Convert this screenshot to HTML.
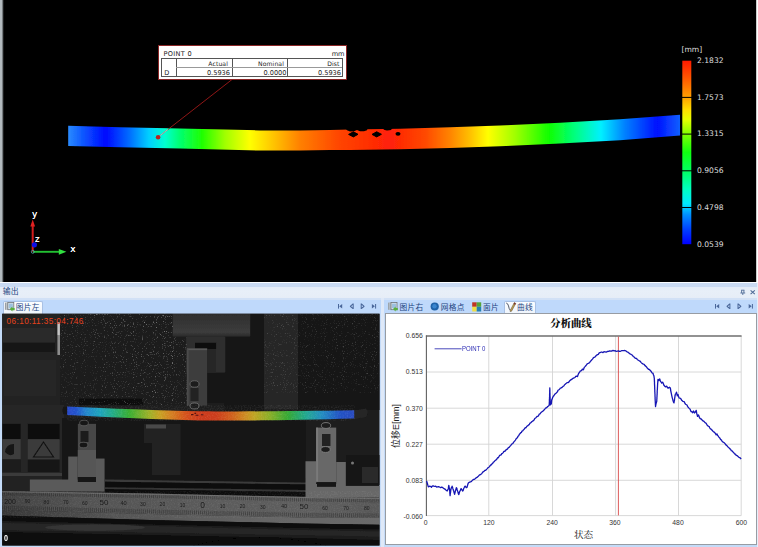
<!DOCTYPE html>
<html lang="zh">
<head>
<meta charset="utf-8">
<title>输出</title>
<style>
html,body{margin:0;padding:0}
body{width:758px;height:547px;position:relative;overflow:hidden;background:#c4dbf8;font-family:"Liberation Sans","Noto Sans CJK SC",sans-serif}
.a{position:absolute}
svg{position:absolute;left:0;top:0;display:block}
.t{position:absolute;white-space:nowrap;line-height:1}
.dv{font-family:"DejaVu Sans","Liberation Sans",sans-serif}
.tab{font-size:7.7px;color:#22437f;letter-spacing:.25px}
.yl{font-size:6.8px;color:#333;text-align:right;width:30px}
.xl{font-size:6.8px;color:#333;text-align:center;width:30px}
.cb{font-size:7.6px;color:#dedede}
.lb{font-size:6.6px;color:#222}
</style>
</head>
<body>
<!-- ================= 3D VIEW ================= -->
<div class="a" style="left:0;top:0;width:758px;height:282px;background:#000"></div>
<div class="a" style="left:0;top:0;width:4px;height:282px;background:linear-gradient(90deg,#b4bcc0 0,#b0b8bc 2px,#3a3d3f 3px,#000 4px)"></div>
<div class="a" style="left:756px;top:0;width:2px;height:283px;background:linear-gradient(90deg,#9a9a9a,#fff 1px)"></div>
<svg width="758" height="282" viewBox="0 0 758 282">
<defs>
<linearGradient id="bg" gradientUnits="userSpaceOnUse" x1="68" y1="0" x2="680" y2="0">
<stop offset="0.0000" stop-color="#2a8cff"/>
<stop offset="0.0278" stop-color="#0a50ff"/>
<stop offset="0.0621" stop-color="#0008ff"/>
<stop offset="0.1013" stop-color="#0070ff"/>
<stop offset="0.1324" stop-color="#00d0ff"/>
<stop offset="0.1585" stop-color="#00ffd0"/>
<stop offset="0.1830" stop-color="#00ff70"/>
<stop offset="0.2190" stop-color="#20ff00"/>
<stop offset="0.2565" stop-color="#a0ff00"/>
<stop offset="0.2974" stop-color="#ffff00"/>
<stop offset="0.3382" stop-color="#ffc000"/>
<stop offset="0.3791" stop-color="#ff8000"/>
<stop offset="0.4444" stop-color="#ff4400"/>
<stop offset="0.5261" stop-color="#ff2008"/>
<stop offset="0.5833" stop-color="#ff4800"/>
<stop offset="0.6242" stop-color="#ff8400"/>
<stop offset="0.6569" stop-color="#ffc000"/>
<stop offset="0.6863" stop-color="#ffff00"/>
<stop offset="0.7304" stop-color="#a0ff00"/>
<stop offset="0.7859" stop-color="#10ff00"/>
<stop offset="0.8284" stop-color="#00ff80"/>
<stop offset="0.8709" stop-color="#00f0ff"/>
<stop offset="0.9101" stop-color="#0080ff"/>
<stop offset="0.9624" stop-color="#0010ff"/>
<stop offset="1.0000" stop-color="#1060ff"/>
</linearGradient>
<linearGradient id="cbar" gradientUnits="userSpaceOnUse" x1="0" y1="60.7" x2="0" y2="244">
<stop offset="0" stop-color="#ff1a00"/>
<stop offset="0.10" stop-color="#ff5a00"/>
<stop offset="0.20" stop-color="#ffa000"/>
<stop offset="0.27" stop-color="#ffe000"/>
<stop offset="0.32" stop-color="#e8ff00"/>
<stop offset="0.40" stop-color="#80ff00"/>
<stop offset="0.50" stop-color="#10ff10"/>
<stop offset="0.60" stop-color="#00ff60"/>
<stop offset="0.70" stop-color="#00ffc0"/>
<stop offset="0.78" stop-color="#00e8ff"/>
<stop offset="0.84" stop-color="#0090ff"/>
<stop offset="0.92" stop-color="#0040ff"/>
<stop offset="1" stop-color="#0000ff"/>
</linearGradient>
<filter id="soft" x="-5%" y="-20%" width="110%" height="140%"><feGaussianBlur stdDeviation="0.45"/></filter>
</defs>
<!-- beam -->
<g filter="url(#soft)">
<path d="M68.2 125.8 L120.0 127.2 L180.0 128.5 L260.0 130.4 L300.0 130.5 L330.0 130.0 L350.0 129.6 L400.0 128.7 L450.0 127.3 L500.0 125.6 L560.0 122.8 L620.0 119.3 L680.0 114.8 L680.0 135.6 L620.0 140.2 L560.0 143.6 L500.0 146.3 L450.0 147.9 L400.0 149.2 L350.0 150.0 L330.0 150.1 L300.0 150.4 L260.0 150.6 L180.0 148.6 L120.0 147.3 L68.2 145.9z" fill="url(#bg)"/>
<path d="M348.6 134.4 L353.4 131.8 L358 134.3 L353.4 136.9z" fill="#000" stroke="#000" stroke-width="1" stroke-linejoin="round"/>
<path d="M372 134.4 L376.7 131.8 L381.4 134.3 L376.7 136.9z" fill="#000" stroke="#000" stroke-width="1" stroke-linejoin="round"/>
<ellipse cx="398" cy="133.8" rx="2.5" ry="1.9" fill="#000"/>
<path d="M344 127 l3 3.2 l3 1.2 l4 -0.2 l3 -1.2 l3 1.2 l4 0 l3 -1 l1 -3.2z M382 127 l2 2.8 l3 0.8 l4 -0.6 l2 -3z" fill="#000"/>
</g>
<!-- leader -->
<line x1="158.5" y1="136.8" x2="232" y2="79.5" stroke="#a01818" stroke-width="0.9"/>
<line x1="159" y1="136.4" x2="168" y2="129.4" stroke="#d8f0f0" stroke-width="0.9" opacity=".75"/>
<circle cx="158.1" cy="137.2" r="2.3" fill="#b82222"/>
<!-- colour bar -->
<rect x="682.3" y="60.7" width="9" height="183.5" fill="url(#cbar)"/>
<g stroke="#000" stroke-width="1">
<line x1="681" y1="97.4" x2="692.5" y2="97.4"/><line x1="681" y1="134.1" x2="692.5" y2="134.1"/><line x1="681" y1="170.8" x2="692.5" y2="170.8"/><line x1="681" y1="207.5" x2="692.5" y2="207.5"/>
</g>
<!-- axes -->
<g filter="url(#soft)">
<line x1="32.7" y1="251.6" x2="32.7" y2="225" stroke="#d21c1c" stroke-width="2"/>
<path d="M32.7 219.5 L35.1 226.6 L30.3 226.6z" fill="#e02020"/>
<line x1="33" y1="251.8" x2="60" y2="251.8" stroke="#22c032" stroke-width="1.9"/>
<path d="M66.4 251.8 L58.8 248.9 L58.8 254.7z" fill="#30e040"/>
<circle cx="34.4" cy="244.8" r="2.6" fill="#1010e8"/>
<circle cx="32.8" cy="251.8" r="1.5" fill="none" stroke="#5aa0a8" stroke-width="0.8"/>
</g>
</svg>
<div class="t dv" style="left:32.1px;top:209.8px;font-size:9px;color:#fff;text-shadow:0 0 .4px #fff">y</div>
<div class="t dv" style="left:35px;top:234.9px;font-size:8.6px;color:#fff;text-shadow:0 0 .4px #fff">z</div>
<div class="t dv" style="left:70.3px;top:245.3px;font-size:9px;color:#fff;text-shadow:0 0 .4px #fff">x</div>
<!-- colour bar labels -->
<div class="t dv cb" style="left:681.5px;top:45.6px">[mm]</div>
<div class="t dv cb" style="left:697px;top:56.8px">2.1832</div>
<div class="t dv cb" style="left:697px;top:93.6px">1.7573</div>
<div class="t dv cb" style="left:697px;top:130.3px">1.3315</div>
<div class="t dv cb" style="left:697px;top:167.0px">0.9056</div>
<div class="t dv cb" style="left:697px;top:203.8px">0.4798</div>
<div class="t dv cb" style="left:697px;top:240.5px">0.0539</div>
<!-- annotation label -->
<div class="a" style="left:157.8px;top:45.4px;width:187.2px;height:32.8px;background:#fff;border:1px solid #8a2626"></div>
<div class="t dv lb" style="left:163.6px;top:51.4px;letter-spacing:.3px">POINT 0</div>
<div class="t dv lb" style="left:300px;width:44.5px;text-align:right;top:51.4px">mm</div>
<div class="a" style="left:161px;top:57.7px;width:179.8px;height:17.8px;border:1px solid #555;box-sizing:content-box"></div>
<div class="a" style="left:176px;top:58px;width:1px;height:18px;background:#555"></div>
<div class="a" style="left:231.5px;top:58px;width:1px;height:18px;background:#555"></div>
<div class="a" style="left:287px;top:58px;width:1px;height:18px;background:#555"></div>
<div class="a" style="left:176px;top:67px;width:165.6px;height:1px;background:#999"></div>
<div class="t dv lb" style="left:180px;width:48px;text-align:right;top:60.9px;font-size:6.1px;letter-spacing:.1px">Actual</div>
<div class="t dv lb" style="left:236px;width:48px;text-align:right;top:60.9px;font-size:6.1px;letter-spacing:.1px">Nominal</div>
<div class="t dv lb" style="left:292px;width:47.6px;text-align:right;top:60.9px;font-size:6.1px;letter-spacing:.1px">Dist</div>
<div class="t dv lb" style="left:164.3px;top:70.2px">D</div>
<div class="t dv lb" style="left:180px;width:50px;text-align:right;top:70.2px">0.5936</div>
<div class="t dv lb" style="left:236px;width:50.5px;text-align:right;top:70.2px">0.0000</div>
<div class="t dv lb" style="left:292px;width:49px;text-align:right;top:70.2px">0.5936</div>
<!-- ================= OUTPUT PANEL HEADER ================= -->
<div class="a" style="left:0;top:282px;width:758px;height:1.4px;background:#fafcff"></div>
<div class="a" style="left:0;top:283.4px;width:758px;height:3.3px;background:#c9daf2"></div>
<div class="a" style="left:0;top:286.6px;width:758px;height:11.6px;background:linear-gradient(180deg,#e4ecf7,#e8eff8 40%,#e6edf7)"></div>
<div class="a" style="left:0;top:298.1px;width:758px;height:1.5px;background:#d2e1f6"></div>
<div class="a" style="left:0;top:299.5px;width:758px;height:14px;background:#bfd9fb"></div>
<div class="a" style="left:381.3px;top:298.4px;width:2.9px;height:249px;background:#dfe9f8"></div>
<div class="a" style="left:756.6px;top:283px;width:1.4px;height:264px;background:#e6eef9"></div>
<div class="t" style="left:2.8px;top:288.3px;font-size:7.9px;color:#24467f">输出</div>
<!-- pin / close -->
<svg width="758" height="547" viewBox="0 0 758 547" style="pointer-events:none">
<g stroke="#4f6b96" fill="none" stroke-width="0.9">
<path d="M741.2 290.2 h3.2 M741.6 290.2 v2.7 M743.9 290.2 v2.7 M740.4 293 h4.8 M742.8 293 v2"/>
<path d="M750.6 290.3 l4.2 3.8 M754.8 290.3 l-4.2 3.8" stroke-width="1.1"/>
</g>
<!-- nav arrows right -->
<g fill="#4a679a" stroke="none">
<rect x="715" y="304" width="1" height="4.6"/><path d="M719.2 304 v4.6 l-3 -2.3z"/>
<path d="M730.4 303.6 v5.4 h-1 l-2.8 -2.3 v-0.8 l2.8 -2.3z M729.4 305 v2.6 l-1.6 -1.3z" fill-rule="evenodd"/>
<path d="M737.5 303.6 v5.4 h1 l2.8 -2.3 v-0.8 l-2.8 -2.3z M738.5 305 v2.6 l1.6 -1.3z" fill-rule="evenodd"/>
<rect x="751.9" y="304" width="1" height="4.6"/><path d="M748.7 304 v4.6 l3 -2.3z"/>
</g>
<!-- nav arrows left -->
<g fill="#4a679a" stroke="none">
<rect x="338" y="304" width="1" height="4.6"/><path d="M342.2 304 v4.6 l-3 -2.3z"/>
<path d="M353.7 303.6 v5.4 h-1 l-2.8 -2.3 v-0.8 l2.8 -2.3z M352.7 305 v2.6 l-1.6 -1.3z" fill-rule="evenodd"/>
<path d="M360.7 303.6 v5.4 h1 l2.8 -2.3 v-0.8 l-2.8 -2.3z M361.7 305 v2.6 l1.6 -1.3z" fill-rule="evenodd"/>
<rect x="375.1" y="304" width="1" height="4.6"/><path d="M371.9 304 v4.6 l3 -2.3z"/>
</g>
</svg>
<!-- left tab -->
<div class="a" style="left:3.4px;top:301.3px;width:39.2px;height:12.3px;background:linear-gradient(180deg,#fbfdff,#eef4fc);border:1px solid #a9c1e4;border-bottom:none;border-radius:2px 2px 0 0;box-sizing:border-box"></div>
<svg width="758" height="547" viewBox="0 0 758 547">
<!-- picture icon (left tab) -->
<g id="picico">
<rect x="4.9" y="302.6" width="1.4" height="7.2" fill="#9aa0a4"/>
<rect x="6.3" y="302.3" width="1.4" height="7.6" fill="#b4b8bc"/>
<rect x="7.8" y="302.5" width="6" height="7.2" fill="#dfe7ec" stroke="#6a7278" stroke-width="0.8"/>
<rect x="8.8" y="303.6" width="4" height="4.6" fill="#9cc0de"/>
<path d="M9.8 309 l2.6 -2.4 v1.4 h2.2 v2.2 h-2.2 v1.3z" fill="#58b03c"/>
</g>
<use href="#picico" x="383.2" y="0"/>
<!-- grid point icon -->
<circle cx="434.7" cy="306.5" r="4.1" fill="#1f62a8"/>
<circle cx="434.5" cy="306.2" r="2.2" fill="#3b86cf"/>
<!-- patch icon -->
<rect x="472.2" y="302.3" width="4.5" height="4.5" fill="#c03422"/>
<rect x="476.7" y="302.3" width="4.5" height="4.5" fill="#55a438"/>
<rect x="472.2" y="306.8" width="4.5" height="4.7" fill="#f0de44"/>
<rect x="476.7" y="306.8" width="4.5" height="4.7" fill="#2580b0"/>
</svg>
<div class="t tab" style="left:15.8px;top:303.5px">图片左</div>
<div class="t tab" style="left:399.6px;top:303.5px">图片右</div>
<div class="t tab" style="left:440.8px;top:303.5px">网格点</div>
<div class="t tab" style="left:483px;top:303.5px">面片</div>
<!-- active curve tab -->
<div class="a" style="left:504.4px;top:301.4px;width:31.4px;height:12.2px;background:linear-gradient(180deg,#fbfdff,#eef4fc);border:1px solid #a9c1e4;border-bottom:none;border-radius:2px 2px 0 0;box-sizing:border-box"></div>
<svg width="758" height="547" viewBox="0 0 758 547">
<path d="M506.2 303 q1.7 0.3 2.3 2.9 q0.5 3.2 1.9 4.5" fill="none" stroke="#2c3442" stroke-width="0.8"/>
<path d="M510 310.8 L514.3 302.6 L515.8 303.4 L511.6 311.2 L510.2 311.6z" fill="#bfa050" stroke="#4e3c2a" stroke-width="0.45"/>
<path d="M514.3 302.6 L515.8 303.4 L515.1 304.7 L513.6 303.9z" fill="#7a3030"/>
</svg>
<div class="t tab" style="left:517px;top:303.5px">曲线</div>
<!-- ================= LEFT CAMERA IMAGE ================= -->
<svg width="758" height="547" viewBox="0 0 758 547">
<defs>
<clipPath id="pc"><rect x="2.2" y="313.8" width="377.3" height="231.6"/></clipPath>
<filter id="spk" x="0" y="0" width="100%" height="100%">
<feTurbulence type="fractalNoise" baseFrequency="0.9" numOctaves="2" seed="3" result="n"/>
<feColorMatrix in="n" type="matrix" values="0 0 0 0 1  0 0 0 0 1  0 0 0 0 1  3.2 0 0 0 -1.95"/>
</filter>
<filter id="grain" x="0" y="0" width="100%" height="100%">
<feTurbulence type="fractalNoise" baseFrequency="0.7" numOctaves="2" seed="9" result="n"/>
<feColorMatrix in="n" type="matrix" values="0 0 0 0 1  0 0 0 0 1  0 0 0 0 1  1.2 0 0 0 -0.5"/>
</filter>
<filter id="b0" x="0" y="0" width="100%" height="100%"><feGaussianBlur stdDeviation="0.55"/></filter>
<filter id="b1" x="-5%" y="-5%" width="110%" height="110%"><feGaussianBlur stdDeviation="0.7"/></filter>
<filter id="b2" x="-10%" y="-10%" width="120%" height="120%"><feGaussianBlur stdDeviation="1.6"/></filter>
<linearGradient id="pb" gradientUnits="userSpaceOnUse" x1="67" y1="0" x2="354" y2="0">
<stop offset="0.0000" stop-color="#2848c8"/>
<stop offset="0.0314" stop-color="#2252cc"/>
<stop offset="0.0662" stop-color="#2084cc"/>
<stop offset="0.1150" stop-color="#1fa4bc"/>
<stop offset="0.1568" stop-color="#22ac8a"/>
<stop offset="0.2160" stop-color="#38ae32"/>
<stop offset="0.2857" stop-color="#9cb028"/>
<stop offset="0.3240" stop-color="#c8a022"/>
<stop offset="0.3624" stop-color="#d48020"/>
<stop offset="0.4111" stop-color="#d4541e"/>
<stop offset="0.4634" stop-color="#cc3a1a"/>
<stop offset="0.5192" stop-color="#cc3c1a"/>
<stop offset="0.5749" stop-color="#d0601e"/>
<stop offset="0.6202" stop-color="#cc8a20"/>
<stop offset="0.6516" stop-color="#c0a422"/>
<stop offset="0.7073" stop-color="#88ae28"/>
<stop offset="0.7700" stop-color="#34a834"/>
<stop offset="0.8328" stop-color="#20a890"/>
<stop offset="0.8885" stop-color="#208cc0"/>
<stop offset="0.9512" stop-color="#2252c4"/>
<stop offset="1.0000" stop-color="#2a4cc0"/>
</linearGradient>
<linearGradient id="chd" x1="0" y1="0" x2="0" y2="1"><stop offset="0" stop-color="#2e2e2e"/><stop offset="0.8" stop-color="#3c3c3c"/><stop offset="1" stop-color="#2a2a2a"/></linearGradient>
<linearGradient id="spg" gradientUnits="userSpaceOnUse" x1="60" y1="405" x2="173" y2="313"><stop offset="0" stop-color="#555"/><stop offset="0.5" stop-color="#999"/><stop offset="1" stop-color="#fff"/></linearGradient>
<mask id="spm" maskUnits="userSpaceOnUse" x="60" y="313" width="113" height="92"><rect x="60" y="313" width="113" height="92" fill="url(#spg)"/></mask>
<linearGradient id="rul2" gradientUnits="userSpaceOnUse" x1="0" y1="0" x2="380" y2="0">
<stop offset="0" stop-color="#363636"/><stop offset="0.3" stop-color="#545454"/><stop offset="0.7" stop-color="#666"/><stop offset="1" stop-color="#6a6a6a"/>
</linearGradient>
<linearGradient id="flo" gradientUnits="userSpaceOnUse" x1="0" y1="519" x2="0" y2="546">
<stop offset="0" stop-color="#0c0c0c"/><stop offset="0.25" stop-color="#1a1a1a"/><stop offset="0.5" stop-color="#262626"/><stop offset="0.72" stop-color="#181818"/><stop offset="1" stop-color="#0a0a0a"/>
</linearGradient>
<pattern id="tick" patternUnits="userSpaceOnUse" x="2" y="0" width="1.96" height="10" patternTransform="skewY(1.03)"><rect x="0" y="0" width="0.8" height="10" fill="#1a1a1a"/></pattern>
<linearGradient id="rul" gradientUnits="userSpaceOnUse" x1="0" y1="0" x2="380" y2="0">
<stop offset="0" stop-color="#404040"/><stop offset="0.2" stop-color="#525252"/><stop offset="0.5" stop-color="#5a5a5a"/><stop offset="0.8" stop-color="#5e5e5e"/><stop offset="1" stop-color="#585858"/>
</linearGradient>
</defs>
<g clip-path="url(#pc)">
<rect x="2" y="313" width="378" height="233" fill="#1d1d1d"/>
<g filter="url(#b1)">
<!-- upper area -->
<rect x="2" y="313" width="60" height="92" fill="#212121"/>
<rect x="60" y="313" width="113" height="92" fill="#1b1b1b"/>
<rect x="3" y="328" width="52" height="14" fill="#2c2c2c"/>
<rect x="3" y="343" width="52" height="9" fill="#161616"/>
<rect x="4" y="360" width="52" height="36" fill="#272727"/>
<rect x="57.4" y="322" width="2.6" height="33" fill="#8c8c8c"/><rect x="57.6" y="323" width="2.2" height="12" fill="#c4c4c4"/>
<rect x="224" y="313" width="40" height="100" fill="#151515"/>
<rect x="264" y="313" width="34" height="96" fill="#272727"/>
<rect x="298" y="313" width="82" height="96" fill="#181818"/><rect x="298" y="392" width="82" height="18" fill="#131313"/>
<!-- crosshead -->
<rect x="172.7" y="313" width="77.5" height="23.7" fill="url(#chd)"/>
<rect x="172.7" y="336.7" width="14" height="69" fill="#1f1f1f"/><rect x="186.2" y="336.7" width="39.2" height="35.8" fill="#2d2d2d"/>
<rect x="195.1" y="342.8" width="21" height="6" fill="#0c0c0c"/>
<rect x="207" y="349" width="9" height="23.5" fill="#262626"/>
<rect x="186.9" y="348.5" width="20.2" height="57" fill="#3d3d3d"/><rect x="186.9" y="348.5" width="20.2" height="1.6" fill="#585858"/>
<rect x="186.9" y="348.5" width="1.6" height="57" fill="#4c4c4c"/>
<rect x="207.6" y="373" width="42" height="30" fill="#191919"/>
<ellipse cx="194.5" cy="384" rx="4.5" ry="3.2" fill="#1a1a1a" stroke="#777" stroke-width="0.7"/>
<rect x="190.5" y="388" width="8" height="13" fill="#222"/>
<ellipse cx="194.5" cy="406" rx="4.5" ry="3" fill="#1a1a1a" stroke="#888" stroke-width="0.7"/>
<!-- dark strip above beam left -->
<rect x="79" y="398.5" width="64" height="7" fill="#101010"/>

<!-- middle dark zone -->
<rect x="2" y="405" width="62" height="86" fill="#262626"/>
<rect x="62" y="418" width="244" height="73" fill="#131313"/>
<rect x="144" y="424" width="36.5" height="51" fill="#232323"/>
<rect x="146" y="424.5" width="20" height="4" fill="#4a4a4a"/>
<rect x="105" y="443" width="47" height="38" fill="#191919"/>
<rect x="210" y="430" width="96" height="48" fill="#181818"/>
<!-- labels -->
<rect x="2.3" y="423.8" width="18.4" height="15.4" fill="#0c0c0c"/>
<rect x="2.3" y="439.2" width="18.4" height="20.2" fill="#3d3d3d"/>
<rect x="2.3" y="459.4" width="18.4" height="12.6" fill="#1a1a1a"/>
<rect x="27.8" y="423.8" width="31.7" height="15.4" fill="#0c0c0c"/>
<rect x="27.8" y="439.2" width="31.7" height="20.4" fill="#3b3b3b"/>
<rect x="27.8" y="459.6" width="31.7" height="12.4" fill="#171717"/>
<path d="M43.5 442 l10 15 h-20z" fill="none" stroke="#111" stroke-width="1.1"/>
<path d="M5 452 q1 -8 9 -8 v10 q-5 3 -9 -2z" fill="#151515"/>
<!-- rails -->
<rect x="2" y="473" width="60" height="3" fill="#3a3a3a"/>
<rect x="2" y="476" width="60" height="15" fill="#202020"/>
<path d="M105 479.6 L306 482.4 L306 484.6 L105 481.8z" fill="#3a3a3a"/>
<path d="M105 481.8 L306 484.6 L306 490 L105 487.4z" fill="#0e0e0e"/>
<path d="M105 487.2 L306 490 L306 492 L105 489.2z" fill="#343434"/>
<path d="M105 489.2 L306 492 L306 498 L105 494z" fill="#0c0c0c"/>
<!-- left support -->
<path d="M29.8 479.5 H68.2 V456.4 H77.8 V479.5 H96 V458.4 H104.6 V491.6 H29.8z" fill="#5a5a5a"/>
<rect x="77.8" y="423.8" width="18.2" height="55.7" fill="#464646"/>
<rect x="77.8" y="450" width="18.2" height="27" fill="#565656"/>
<rect x="77.8" y="477" width="18.2" height="5" fill="#121212"/>
<rect x="80.5" y="431" width="8" height="11" fill="#1b1b1b"/>
<ellipse cx="84" cy="423" rx="4.4" ry="2.8" fill="#181818" stroke="#666" stroke-width="0.7"/>
<ellipse cx="83.5" cy="445" rx="4.4" ry="2.8" fill="#181818" stroke="#666" stroke-width="0.7"/>
<!-- right support -->
<path d="M305.5 461.2 H316 V484 H336.2 V462 H345.8 V486 H380 V497.4 H305.5z" fill="#686868"/>
<rect x="316.1" y="427.6" width="20.1" height="54.7" fill="#686868"/>
<rect x="316.1" y="427.6" width="2" height="54" fill="#7a7a7a"/>
<rect x="317" y="482.3" width="19" height="4.5" fill="#141414"/>
<rect x="322" y="434" width="8.5" height="12" fill="#242424"/>
<ellipse cx="326" cy="425.5" rx="4.6" ry="2.9" fill="#1a1a1a" stroke="#8a8a8a" stroke-width="0.8"/>
<ellipse cx="325.5" cy="449.5" rx="4.6" ry="2.9" fill="#1a1a1a" stroke="#8a8a8a" stroke-width="0.8"/>
<rect x="346" y="455" width="34" height="30" fill="#161616"/>
<rect x="362" y="467" width="16" height="16" fill="#2b2b2b"/>
<circle cx="352.5" cy="463" r="1.5" fill="#777"/>
<!-- specimen beyond colour -->
<path d="M354 410.4 L366 408.5 Q369 412 366 417 L354 419z" fill="#262626"/>
<ellipse cx="65" cy="410.5" rx="2.4" ry="4" fill="#121212"/>
<!-- ruler -->
<path d="M2 491 L150 493.5 L300 496.8 L380 497.8 L380 518 L300 517.4 L150 514 L2 510z" fill="url(#rul)"/>
<path d="M2 491 L150 493.5 L300 496.8 L380 497.8 L380 499.2 L300 498.2 L150 494.9 L2 492.4z" fill="#7a7a7a" opacity=".5"/>
<path d="M2 510 L150 514 L300 517.4 L380 518 L380 524.8 L300 523.5 L150 520 L2 515.5z" fill="url(#rul2)"/>
<path d="M2 515.5 L150 520 L300 523.5 L380 524.8 L380 547 L2 547z" fill="#0a0a0a"/>
<path d="M2 521 L150 524.5 L300 528 L380 529.5 L380 540 L300 538 L150 535 L2 532z" fill="#1e1e1e"/>
<path d="M2 523 L150 526 L300 530 L380 531.5 L380 536.5 L300 535 L150 532.6 L2 530z" fill="#272727"/>
<ellipse cx="95" cy="527.5" rx="50" ry="3.2" fill="#343434"/>
<path d="M190 546 Q255 528 330 546z" fill="#070707"/>
</g>
<path d="M2 492.2 L150 494.7 L300 498 L380 499 L380 502.4 L300 501.4 L150 498.1 L2 495.6z" fill="url(#tick)" opacity=".5"/>
<path d="M2 505.6 L150 509.4 L300 512.8 L380 513.4 L380 517.4 L300 516.8 L150 513.4 L2 509.4z" fill="url(#tick)" opacity=".5"/>
<!-- speckle -->
<g filter="url(#b0)" mask="url(#spm)"><rect x="60" y="313" width="113" height="92" filter="url(#spk)" opacity="0.62"/></g>
<g filter="url(#b0)"><rect x="172.7" y="337" width="14" height="68" filter="url(#spk)" opacity="0.35"/></g>
<g filter="url(#b0)"><rect x="264" y="313" width="116" height="80" filter="url(#spk)" opacity="0.24"/></g>
<rect x="2" y="491" width="378" height="27" filter="url(#grain)" opacity="0.16"/>
<!-- coloured specimen -->
<g filter="url(#b1)">
<path d="M67.2 406.5 C110 408.4 160 410.6 200 411.2 C240 411.7 300 411.2 354.2 410.3 L354.2 418.6 C300 420.2 240 421 200 420.4 C160 419.6 110 417 67.2 414.9z" fill="url(#pb)"/>
<path d="M191 414.6 h2.5 m2 0.6 h3 m2.5 -0.4 h2.5 m-9 -1.4 h1.6" stroke="#501010" stroke-width="1.1" fill="none"/>
</g>
<rect x="67" y="405" width="288" height="16" filter="url(#grain)" opacity="0.18"/>
</g>
</svg>
<div class="t" style="left:10.0px;top:501.0px;font-size:7.0px;color:#111;opacity:.85;transform:translate(-50%,-50%)">200</div><div class="t" style="left:27.6px;top:501.4px;font-size:5.0px;color:#111;opacity:.85;transform:translate(-50%,-50%)">90</div><div class="t" style="left:46.4px;top:501.8px;font-size:5.0px;color:#111;opacity:.85;transform:translate(-50%,-50%)">80</div><div class="t" style="left:65.7px;top:502.2px;font-size:5.0px;color:#111;opacity:.85;transform:translate(-50%,-50%)">70</div><div class="t" style="left:84.7px;top:502.6px;font-size:5.0px;color:#111;opacity:.85;transform:translate(-50%,-50%)">60</div><div class="t" style="left:104.0px;top:503.0px;font-size:8.0px;color:#111;opacity:.85;transform:translate(-50%,-50%)">50</div><div class="t" style="left:123.6px;top:503.5px;font-size:5.6px;color:#111;opacity:.85;transform:translate(-50%,-50%)">40</div><div class="t" style="left:142.9px;top:503.9px;font-size:5.0px;color:#111;opacity:.85;transform:translate(-50%,-50%)">30</div><div class="t" style="left:162.4px;top:504.3px;font-size:5.0px;color:#111;opacity:.85;transform:translate(-50%,-50%)">20</div><div class="t" style="left:182.5px;top:504.8px;font-size:5.0px;color:#111;opacity:.85;transform:translate(-50%,-50%)">10</div><div class="t" style="left:202.5px;top:505.2px;font-size:8.4px;color:#111;opacity:.85;transform:translate(-50%,-50%)">0</div><div class="t" style="left:222.6px;top:505.7px;font-size:5.0px;color:#111;opacity:.85;transform:translate(-50%,-50%)">10</div><div class="t" style="left:242.6px;top:506.1px;font-size:5.0px;color:#111;opacity:.85;transform:translate(-50%,-50%)">20</div><div class="t" style="left:262.7px;top:506.6px;font-size:5.0px;color:#111;opacity:.85;transform:translate(-50%,-50%)">30</div><div class="t" style="left:284.0px;top:507.0px;font-size:5.6px;color:#111;opacity:.85;transform:translate(-50%,-50%)">40</div><div class="t" style="left:304.0px;top:507.4px;font-size:8.0px;color:#111;opacity:.85;transform:translate(-50%,-50%)">50</div><div class="t" style="left:325.0px;top:507.7px;font-size:5.0px;color:#111;opacity:.85;transform:translate(-50%,-50%)">60</div><div class="t" style="left:346.0px;top:507.9px;font-size:5.0px;color:#111;opacity:.85;transform:translate(-50%,-50%)">70</div><div class="t" style="left:366.7px;top:508.1px;font-size:5.0px;color:#111;opacity:.85;transform:translate(-50%,-50%)">80</div>
<div class="t" style="left:6.6px;top:317.6px;font-size:8.2px;color:#e8421c;letter-spacing:0.4px">06:10:11:35:04:746</div>
<div class="t" style="left:3.6px;top:534.2px;font-size:9px;font-weight:bold;color:#fff;transform:scaleX(.8);transform-origin:0 0">0</div>
<!-- ================= CHART PANEL ================= -->
<div class="a" style="left:384.6px;top:313.2px;width:372.6px;height:231.6px;background:#fff;border:1.3px solid #979ca3;border-right-width:1.8px;box-sizing:border-box"></div>
<svg width="758" height="547" viewBox="0 0 758 547">
<g stroke="#d4d4d4" stroke-width="0.9" fill="none">
<line x1="426.4" y1="372" x2="741.2" y2="372"/><line x1="426.4" y1="408.2" x2="741.2" y2="408.2"/><line x1="426.4" y1="444.2" x2="741.2" y2="444.2"/><line x1="426.4" y1="480.3" x2="741.2" y2="480.3"/><line x1="426.4" y1="515.6" x2="741.2" y2="515.6"/>
<line x1="488.8" y1="336" x2="488.8" y2="515.6"/><line x1="552.5" y1="336" x2="552.5" y2="515.6"/><line x1="615.6" y1="336" x2="615.6" y2="515.6"/><line x1="678.5" y1="336" x2="678.5" y2="515.6"/><line x1="741.2" y1="336" x2="741.2" y2="515.6"/>
</g>
<line x1="425.9" y1="336" x2="741.6" y2="336" stroke="#6e6e6e" stroke-width="1.3"/>
<line x1="426.4" y1="335.4" x2="426.4" y2="516" stroke="#606060" stroke-width="1.1"/>
<line x1="618.4" y1="336.6" x2="618.4" y2="515.4" stroke="#d84848" stroke-width="0.9"/>
<line x1="434.6" y1="348.8" x2="461.6" y2="348.8" stroke="#3434b4" stroke-width="0.9"/>
<polyline points="426.6,481.0 427.0,482.2 427.4,483.5 427.7,484.6 428.0,485.8 428.3,486.9 429.9,486.2 430.7,486.5 431.5,487.2 432.2,486.1 433.0,485.8 433.9,486.2 434.8,486.3 435.7,486.2 436.6,487.0 437.6,486.8 438.5,486.6 439.6,487.0 440.6,487.7 441.6,487.1 442.5,487.4 443.5,488.2 444.5,489.0 445.2,489.1 446.0,490.2 447.2,491.0 447.7,489.9 448.2,489.0 448.4,488.1 448.5,487.1 448.6,486.2 448.8,485.3 449.0,486.2 449.1,487.1 449.3,488.1 449.5,489.0 449.6,489.9 449.7,490.9 449.8,491.8 449.8,492.8 449.9,493.7 450.0,494.7 450.1,495.6 450.2,494.7 450.3,493.7 450.5,492.8 450.6,491.9 450.7,490.9 450.8,490.0 451.1,488.6 451.5,487.6 451.8,487.0 452.1,486.1 452.5,487.2 452.8,488.4 453.2,489.5 453.5,490.5 453.8,491.4 454.0,492.4 454.3,493.3 454.6,494.3 454.8,493.4 455.1,492.4 455.3,491.4 455.5,490.5 455.8,489.9 456.2,488.2 456.5,487.7 456.9,488.5 457.2,490.0 457.6,491.0 457.9,491.9 458.1,492.8 458.4,493.7 458.7,494.6 459.0,494.2 459.3,492.9 459.6,491.8 459.9,491.0 460.3,490.7 460.8,488.9 461.2,488.6 462.0,490.0 462.8,491.0 463.2,490.4 463.6,488.8 464.0,488.0 464.6,486.7 465.3,486.1 466.1,487.5 466.9,487.7 467.2,486.6 467.5,485.6 467.8,484.5 468.2,483.2 468.6,482.8 469.6,482.1 470.5,481.9 471.5,481.4 472.5,480.2 473.4,479.4 474.2,479.4 475.1,478.7 476.0,477.9 477.0,477.4 478.0,476.6 478.9,475.6 479.8,474.8 480.8,474.3 481.7,473.7 482.5,472.5 483.2,471.7 484.0,471.4 484.8,470.4 485.7,470.3 486.5,469.4 487.3,468.6 488.0,467.7 488.8,467.2 489.4,466.6 490.1,465.8 490.7,464.9 491.4,464.8 492.0,463.8 492.7,463.3 493.4,462.1 494.1,461.7 494.8,460.9 495.5,460.2 496.2,459.9 496.9,459.0 497.6,457.7 498.3,457.8 499.0,456.5 499.7,455.4 500.4,455.1 501.1,454.9 501.8,453.6 502.5,453.3 503.2,452.6 503.9,451.4 504.6,451.4 505.3,450.9 506.0,449.9 506.7,449.4 507.4,449.1 508.2,447.8 508.9,447.4 509.5,446.9 510.1,446.1 510.8,445.4 511.4,444.6 512.0,443.9 512.7,443.5 513.4,442.8 514.1,441.5 514.8,441.0 515.5,440.0 516.0,438.8 516.5,438.7 517.0,437.9 517.5,437.5 518.0,436.2 518.7,435.7 519.4,434.2 520.1,433.5 520.8,432.7 521.4,432.4 522.0,431.0 522.7,430.8 523.4,429.8 524.0,429.5 524.7,428.4 525.3,427.7 526.0,427.8 526.7,426.5 527.3,426.0 528.0,425.6 528.7,424.8 529.3,424.6 530.0,423.1 530.7,422.8 531.3,422.2 532.0,421.5 532.7,421.2 533.4,420.5 534.1,419.9 534.8,418.5 535.5,418.0 536.2,417.4 537.0,416.5 537.7,416.4 538.5,415.8 539.2,414.2 540.0,413.9 540.7,412.9 541.3,412.3 542.0,411.7 542.7,411.3 543.3,410.7 544.0,410.0 544.8,409.1 545.5,408.1 546.2,407.9 547.0,407.3 547.7,406.5 548.5,406.0 549.2,405.3 549.2,404.4 549.3,403.4 549.3,402.5 549.4,401.6 549.4,400.6 549.4,399.7 549.5,398.8 549.5,397.9 549.6,396.9 549.6,396.0 549.6,395.1 549.6,394.2 549.7,393.3 549.7,392.4 549.7,391.4 549.7,390.5 549.8,389.6 549.8,388.7 549.8,387.8 549.8,388.7 549.9,389.7 549.9,390.6 549.9,391.5 549.9,392.4 550.0,393.4 550.0,394.3 550.0,395.2 550.0,396.1 550.1,397.1 550.1,398.0 550.1,399.0 550.2,399.9 550.2,400.9 550.3,401.9 550.3,402.9 550.4,403.8 550.4,404.8 550.6,403.6 550.9,402.5 551.3,404.0 551.4,403.1 551.5,402.2 551.6,401.3 551.7,400.4 551.8,399.5 552.2,399.0 552.6,397.6 553.3,396.3 553.9,395.7 554.4,394.8 555.0,394.0 556.0,393.3 557.0,392.3 557.5,391.7 558.0,390.3 558.5,390.0 559.4,389.5 560.3,388.2 561.2,387.9 562.1,387.4 563.0,386.4 563.8,386.0 564.5,384.9 565.2,384.2 566.0,383.6 567.0,382.6 568.0,382.6 569.0,381.9 569.8,380.7 570.5,380.1 571.2,379.6 572.0,379.2 573.0,378.3 574.0,377.9 575.0,377.5 575.7,376.4 576.4,376.2 577.5,376.6 577.9,375.2 578.2,374.4 578.6,373.5 579.0,373.0 579.6,372.1 580.2,371.1 580.8,370.9 581.6,370.4 582.4,369.1 583.2,369.8 583.7,369.1 584.1,367.8 584.5,367.1 585.0,366.6 585.8,365.7 586.5,364.9 587.2,363.9 588.0,363.5 588.8,363.1 589.7,362.5 590.5,361.2 591.2,360.5 591.8,359.8 592.5,359.1 593.3,357.9 594.2,357.3 595.0,357.0 595.8,356.0 596.7,355.1 597.5,354.6 598.3,354.3 599.2,352.9 600.0,352.6 601.5,352.0 603.0,352.6 604.0,351.7 605.0,351.8 606.2,352.1 607.3,351.5 608.5,351.3 609.7,350.8 610.8,351.1 612.0,351.0 613.0,350.4 614.0,350.8 615.0,350.7 616.2,351.3 617.3,351.2 618.5,350.8 619.5,351.3 620.5,351.3 621.5,350.7 622.5,350.7 623.6,350.6 624.8,350.5 625.9,350.9 627.0,351.8 628.0,352.2 628.9,352.9 629.9,353.8 630.8,354.2 631.6,354.7 632.4,355.2 633.2,356.5 634.0,356.8 634.8,357.9 635.7,358.3 636.5,358.4 637.2,359.4 638.0,360.0 638.8,360.5 639.5,360.9 640.3,361.4 641.2,362.6 642.0,363.4 642.8,363.8 643.5,364.0 644.2,364.5 645.0,365.6 645.7,366.1 646.3,366.7 647.0,367.7 647.8,368.5 648.5,369.4 649.3,369.5 650.1,370.3 651.0,371.2 651.7,372.3 652.3,373.1 653.0,373.2 653.4,374.9 653.8,375.5 654.0,376.4 654.1,377.3 654.3,378.2 654.3,379.2 654.4,380.2 654.4,381.1 654.5,382.1 654.5,383.1 654.5,384.1 654.6,385.1 654.6,386.0 654.7,387.0 654.7,388.0 654.7,388.9 654.8,389.8 654.8,390.7 654.8,391.6 654.9,392.5 654.9,393.5 655.0,394.4 655.0,395.3 655.0,396.2 655.1,397.1 655.1,398.0 655.1,399.0 655.2,399.9 655.2,400.9 655.3,401.8 655.3,402.8 655.4,403.7 655.4,404.7 655.5,405.6 655.5,406.6 655.7,405.6 655.9,404.5 656.1,403.5 656.4,402.4 656.7,401.6 656.8,400.6 656.8,399.7 656.9,398.7 656.9,397.8 657.0,396.8 657.0,395.8 657.1,394.9 657.1,393.9 657.2,393.0 657.2,392.0 657.2,391.0 657.3,390.0 657.4,389.0 657.4,388.0 657.5,387.0 657.5,386.0 657.6,385.0 657.6,384.0 657.7,383.1 657.8,382.2 657.8,381.2 657.9,380.3 658.0,379.4 658.8,380.5 659.2,379.4 659.7,378.9 660.0,379.8 660.2,380.6 660.5,381.5 661.1,382.0 661.7,383.1 662.6,382.2 663.0,382.8 663.4,383.7 663.8,385.0 664.6,386.0 665.4,386.8 666.8,386.2 667.5,387.6 668.2,388.1 669.5,387.2 670.3,388.0 670.5,389.0 670.6,390.0 670.8,391.0 671.0,392.0 671.2,392.9 671.4,393.9 671.6,394.8 671.8,395.8 672.0,396.7 672.2,397.6 672.5,398.6 672.8,399.6 673.0,400.5 673.5,402.1 674.0,402.9 674.1,401.9 674.3,400.9 674.5,400.0 674.6,399.0 674.7,398.0 674.9,397.1 675.0,396.1 675.2,395.2 675.3,394.2 675.9,393.6 676.5,392.2 676.7,393.1 676.9,394.0 677.1,394.9 677.3,395.8 678.0,394.5 678.3,395.6 678.7,396.8 679.0,397.9 680.5,398.3 681.0,399.0 681.5,400.0 682.0,400.6 683.0,401.4 683.9,401.6 684.4,402.0 685.0,403.5 685.5,404.2 687.0,405.0 687.5,406.3 688.0,407.0 688.5,407.5 689.2,408.5 690.0,409.0 690.5,410.2 691.0,411.5 691.8,411.7 692.5,412.7 693.0,412.2 693.5,411.0 694.0,411.8 694.5,413.0 695.1,412.4 695.6,411.7 696.2,410.3 696.4,411.2 696.5,412.1 696.7,413.1 696.9,414.0 697.2,415.2 697.5,416.4 698.5,415.0 698.8,415.8 699.2,416.8 699.5,417.8 700.4,418.8 701.2,418.9 702.1,420.1 703.0,420.9 704.0,421.4 705.0,422.6 705.7,422.9 706.4,423.7 707.2,425.3 707.9,425.9 708.6,426.3 709.2,426.6 709.8,428.0 710.4,428.9 711.0,429.0 711.6,429.9 712.2,430.2 712.9,431.2 713.5,431.8 714.2,432.0 715.0,433.0 715.5,433.4 716.0,434.9 717.0,434.0 717.7,435.6 718.4,436.2 718.9,437.1 719.5,437.7 720.0,438.4 720.7,439.7 721.4,439.9 722.0,441.1 722.7,441.9 723.4,442.3 724.2,442.8 725.0,443.6 725.7,444.5 726.5,445.5 727.2,445.9 727.9,447.0 728.6,447.3 729.3,448.2 730.0,449.0 730.6,449.2 731.3,450.7 731.9,450.8 732.6,451.5 733.2,452.2 734.0,453.0 734.7,454.0 735.5,454.2 736.2,455.4 737.0,455.6 737.8,456.3 738.6,457.0 739.5,457.7 740.3,457.9 741.1,459.1" fill="none" stroke="#1616b4" stroke-width="1.3" stroke-linejoin="round"/>
</svg>
<div class="t" style="left:550.2px;top:319.4px;font-size:10.4px;font-weight:900;color:#111;font-family:'Liberation Serif','Noto Serif CJK SC',serif">分析曲线</div>
<div class="t" style="left:461.8px;top:345.2px;font-size:7px;color:#2c2cb4;transform:scaleX(.86);transform-origin:0 0">POINT 0</div>
<div class="t yl" style="left:392.8px;top:333.4px">0.656</div>
<div class="t yl" style="left:392.8px;top:369.4px">0.513</div>
<div class="t yl" style="left:392.8px;top:405.6px">0.370</div>
<div class="t yl" style="left:392.8px;top:441.6px">0.227</div>
<div class="t yl" style="left:392.8px;top:477.7px">0.083</div>
<div class="t yl" style="left:392.8px;top:513.8px">-0.060</div>
<div class="t xl" style="left:410.6px;top:520.4px">0</div>
<div class="t xl" style="left:473.8px;top:520.4px">120</div>
<div class="t xl" style="left:537.2px;top:520.4px">240</div>
<div class="t xl" style="left:599.8px;top:520.4px">360</div>
<div class="t xl" style="left:663px;top:520.4px">480</div>
<div class="t xl" style="left:726.3px;top:520.4px">600</div>
<div class="t" style="left:574px;top:530px;font-size:9.6px;color:#111;font-family:'Liberation Serif','Noto Serif CJK SC',serif">状态</div>
<div class="t" style="left:396px;top:426px;font-size:9px;color:#222;transform:translate(-50%,-50%) rotate(-90deg);font-family:'Liberation Sans','Noto Sans CJK SC',sans-serif">位移E[mm]</div>
</body>
</html>
